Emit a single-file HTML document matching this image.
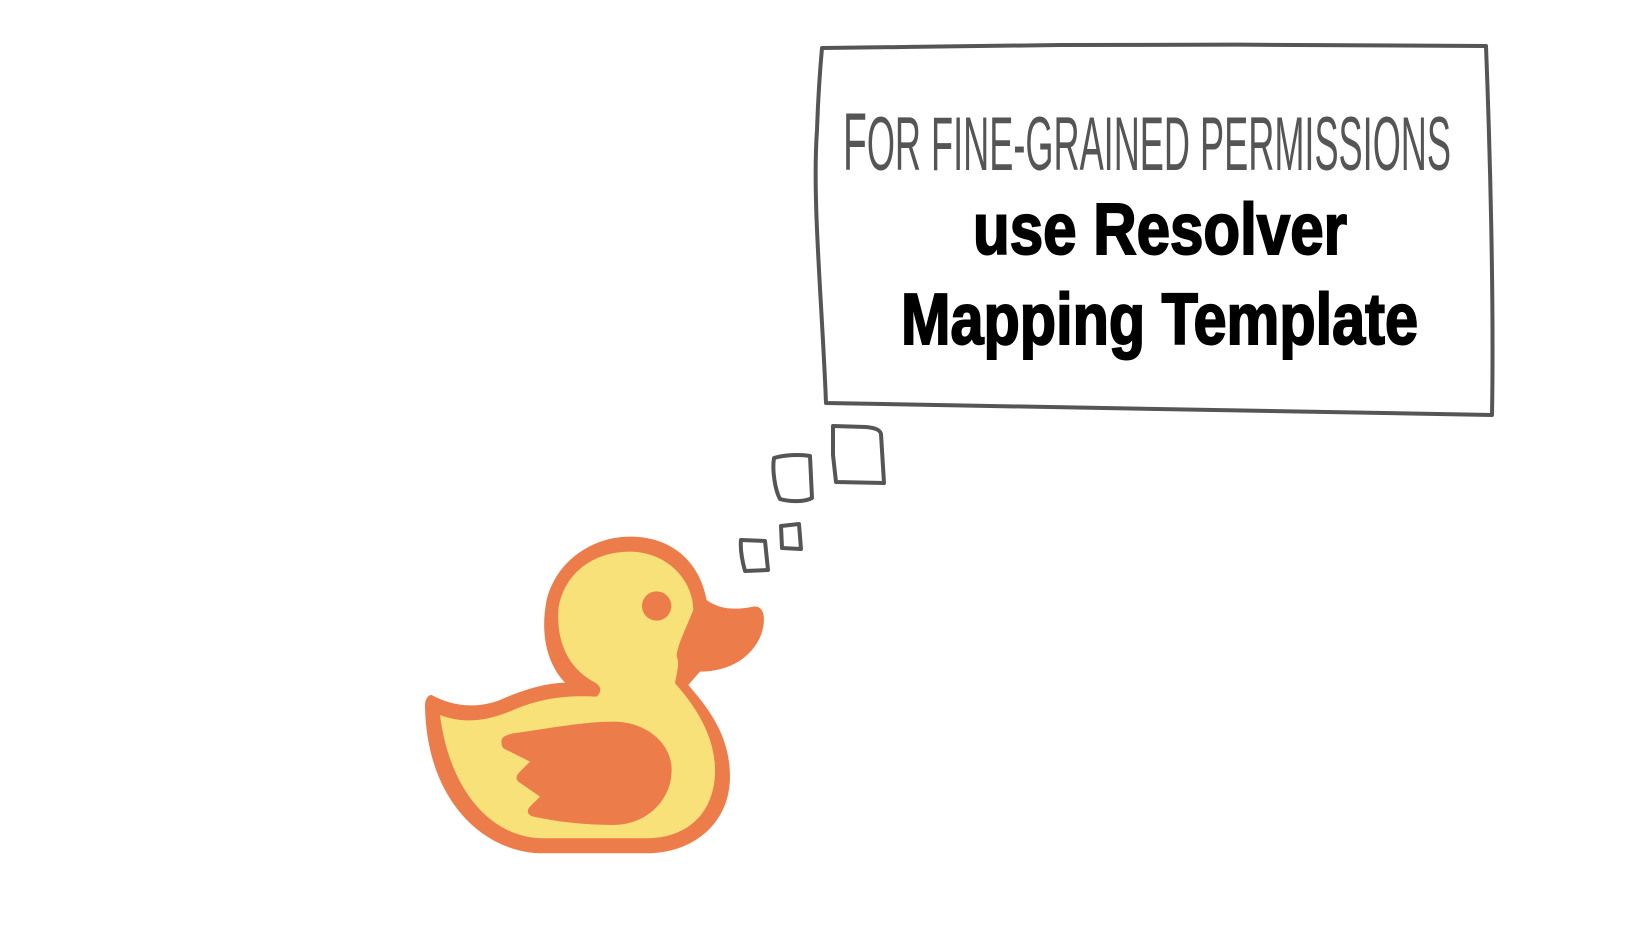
<!DOCTYPE html>
<html><head><meta charset="utf-8"><style>
html,body{margin:0;padding:0;background:#fff;width:1646px;height:926px;overflow:hidden}
</style></head><body>
<svg width="1646" height="926" viewBox="0 0 1646 926" xmlns="http://www.w3.org/2000/svg">
<g fill="none" stroke="#555" stroke-width="4" stroke-linejoin="round">
<path d="M822 48 C900 47 1000 46 1060 45 C1200 44 1350 45 1486 46 C1490 150 1494 300 1492 415 C1300 412 1100 408 826 403 C822 300 812 200 817 130 C818 100 820 70 822 48 Z"/>
<path d="M833 426 L866 427 C876 428 880 430 881 434 L884 483 L836 482 L833 455 Z"/>
<path d="M774 458 C784 455 800 454 810 456 L812 498 C805 502 790 502 780 499 C775 490 772 470 774 458 Z"/>
<path d="M781 526 L799 524 L801 549 L782 548 Z"/>
<path d="M741 540 L765 541 L768 570 L745 571 C742 560 740 550 741 540 Z"/>
</g>
<g transform="translate(400,400) scale(0.3333)">
<path fill="#ec7d4b" d="M95 885 C150 915 220 930 300 900 C380 865 440 850 495 848 C440 790 420 700 440 600 C470 480 580 410 690 410 C820 410 900 490 920 600 C960 630 1010 630 1060 620 C1090 615 1100 650 1085 700 C1060 770 990 815 900 815 L865 855 C930 930 990 1010 990 1130 C990 1270 880 1360 740 1360 L430 1360 C250 1360 80 1200 75 920 C75 895 85 885 95 885 Z"/>
<path fill="#f9e17a" d="M120 945 C200 975 270 960 340 930 C420 895 500 885 590 890 C610 870 600 855 580 845 C500 800 470 720 475 630 C490 520 580 455 690 455 C800 455 880 540 880 630 C860 680 830 740 830 770 C840 790 830 820 825 850 C870 900 940 990 945 1100 C950 1230 870 1315 740 1315 L430 1315 C280 1315 150 1180 120 945 Z"/>
<circle cx="770" cy="618" r="44" fill="#ec7d4b"/>
<path fill="#ec7d4b" d="M305 1030 C300 1010 320 1005 340 1000 C450 985 550 965 640 965 C740 965 815 1030 815 1110 C815 1200 740 1275 640 1275 C550 1275 470 1265 400 1250 C380 1245 380 1230 390 1220 L420 1190 L355 1145 C345 1135 350 1125 360 1115 L390 1085 L320 1050 C305 1045 305 1035 305 1030 Z"/>
</g>
<text x="843" y="170" textLength="608" lengthAdjust="spacingAndGlyphs" font-family="'Liberation Sans Narrow','Liberation Sans',sans-serif" font-size="82" fill="#555">F<tspan font-size="76">OR FINE-GRAINED PERMISSIONS</tspan></text>
<text x="973" y="254" textLength="374" lengthAdjust="spacingAndGlyphs" font-family="'Liberation Sans',sans-serif" font-weight="bold" font-size="72" fill="#000" stroke="#000" stroke-width="2">use Resolver</text>
<text x="901" y="344" textLength="517" lengthAdjust="spacingAndGlyphs" font-family="'Liberation Sans',sans-serif" font-weight="bold" font-size="72" fill="#000" stroke="#000" stroke-width="2">Mapping Template</text>
</svg>
</body></html>
